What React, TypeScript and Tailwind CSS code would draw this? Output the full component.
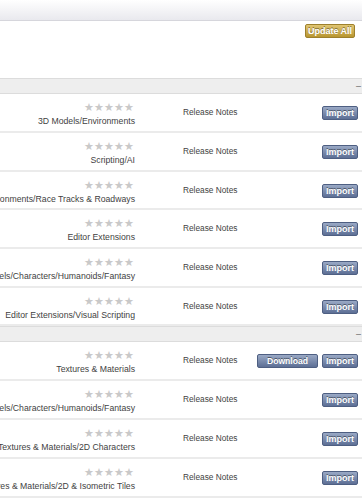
const font = { fontFamily: '"Liberation Sans", Arial, sans-serif' };

type Row = { category: string; download?: boolean; short?: boolean };

const groupA: Row[] = [
  { category: "3D Models/Environments" },
  { category: "Scripting/AI" },
  { category: "3D Models/Environments/Race Tracks & Roadways", short: true },
  { category: "Editor Extensions" },
  { category: "3D Models/Characters/Humanoids/Fantasy" },
  { category: "Editor Extensions/Visual Scripting", short: true },
];

const groupB: Row[] = [
  { category: "Textures & Materials", download: true },
  { category: "3D Models/Characters/Humanoids/Fantasy" },
  { category: "Textures & Materials/2D Characters" },
  { category: "Textures & Materials/2D & Isometric Tiles" },
];

function BlueButton({ label, wide }: { label: string; wide?: boolean }) {
  return (
    <button
      className={`h-[14px] ${wide ? "w-[61px]" : "w-[36px]"} rounded-[2px] border border-[#4e5f82] bg-gradient-to-b from-[#9aa9c5] to-[#5d6f95] ${wide ? "text-[8.6px]" : "text-[9px]"} font-bold leading-none text-white [text-shadow:0_-1px_0_rgba(0,0,0,0.45)]`}
    >
      {label}
    </button>
  );
}

function Stars() {
  return (
    <div className="mr-[2px] flex gap-[1px] text-[11px] leading-[11px] text-[#c9c9c9]">
      {[0, 1, 2, 3, 4].map((i) => (
        <span key={i} className="w-[9px] text-center">
          ★
        </span>
      ))}
    </div>
  );
}

function AssetRow({ row }: { row: Row }) {
  return (
    <div
      className={`flex ${row.short ? "h-[38px]" : "h-[39px]"} items-start border-b-2 border-[#ebebeb] bg-white`}
    >
      <div className="flex w-[135px] shrink-0 flex-col items-end pt-[8px]">
        <Stars />
        <div className="mt-[3px] whitespace-nowrap text-[8.7px] leading-[11px] text-[#3f3f3f]">{row.category}</div>
      </div>
      <div className="ml-[48px] pt-[13px] text-[8.3px] leading-[11px] text-[#3f3f3f]">Release Notes</div>
      <div className="ml-auto flex gap-[4px] pr-[4px] pt-[12px]">
        {row.download && <BlueButton label="Download" wide />}
        <BlueButton label="Import" />
      </div>
    </div>
  );
}

function SectionHeader() {
  return (
    <div className="flex h-[16px] items-center justify-end border-t border-b border-[#dcdcdc] bg-[#eeeeee] pr-[1px]">
      <span className="text-[9px] leading-none text-[#666]">–</span>
    </div>
  );
}

export default function App() {
  return (
    <div className="h-[500px] w-[362px] overflow-hidden bg-white" style={font}>
      <div className="h-[21px] border-b border-[#d6d6dc] bg-gradient-to-b from-white to-[#e9e9ee]" />
      <div className="flex h-[57px] justify-end pr-[7px] pt-[3px]">
        <button className="h-[14px] w-[50px] rounded-[2px] border border-[#9d802d] bg-gradient-to-b from-[#e0c572] to-[#b8962f] text-[9px] font-bold leading-none text-white [text-shadow:0_-1px_0_rgba(0,0,0,0.4)]">
          Update All
        </button>
      </div>
      <SectionHeader />
      {groupA.map((r, i) => (
        <AssetRow key={"a" + i} row={r} />
      ))}
      <SectionHeader />
      {groupB.map((r, i) => (
        <AssetRow key={"b" + i} row={r} />
      ))}
    </div>
  );
}
